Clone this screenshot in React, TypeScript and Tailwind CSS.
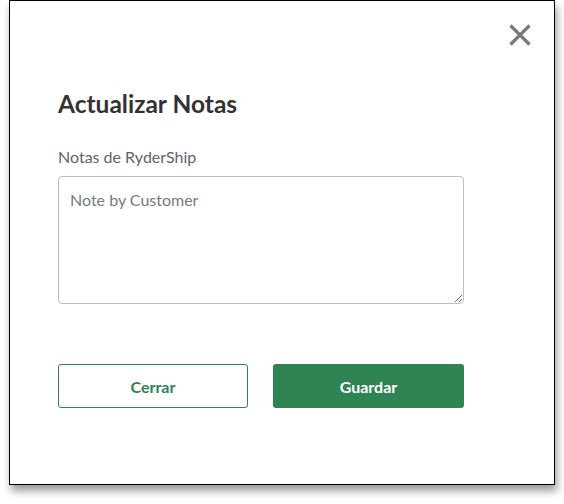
import React from "react";

export default function App() {
  return (
    <div className="w-[564px] h-[504px] bg-white" style={{ fontFamily: "Lato, 'Noto Sans', sans-serif" }}>
      <div className="relative ml-[9px] w-[546px] h-[485px] bg-white border border-black shadow-[2px_6px_8px_rgba(0,0,0,0.4)] px-[48px] pt-[88px]">
        <button className="absolute top-[23px] right-[23px] w-[22px] h-[22px] text-[#7a7a7a]">
          <svg viewBox="0 0 22 22" width="22" height="22" fill="none" stroke="currentColor" strokeWidth="3.2" strokeLinecap="butt">
            <path d="M1.5 1.5 L20.5 20.5 M20.5 1.5 L1.5 20.5" />
          </svg>
        </button>
        <h1 className="text-[24.5px] leading-[29px] font-bold text-[#333333]">Actualizar Notas</h1>
        <label className="block mt-[29px] text-[16px] leading-[19px] text-[#62636b]">Notas de RyderShip</label>
        <textarea
          placeholder="Note by Customer"
          className="block mt-[10px] w-[406px] h-[128px] border border-[#bdbdc2] rounded-[4px] pl-[11px] pr-[11px] py-[11px] text-[16px] leading-6 text-[#333] placeholder:text-[#777a82] outline-none"
          style={{ fontFamily: "Lato, 'Noto Sans', sans-serif" }}
        />
        <div className="flex gap-[25px] mt-[60px]">
          <button className="w-[190px] h-[44px] pt-[2px] border border-[#2e8553] rounded-[3px] bg-white text-[#2e8553] text-[16px] font-bold">
            Cerrar
          </button>
          <button className="w-[191px] h-[44px] pt-[2px] rounded-[3px] bg-[#2e8553] text-white text-[16px] font-bold">
            Guardar
          </button>
        </div>
      </div>
    </div>
  );
}
